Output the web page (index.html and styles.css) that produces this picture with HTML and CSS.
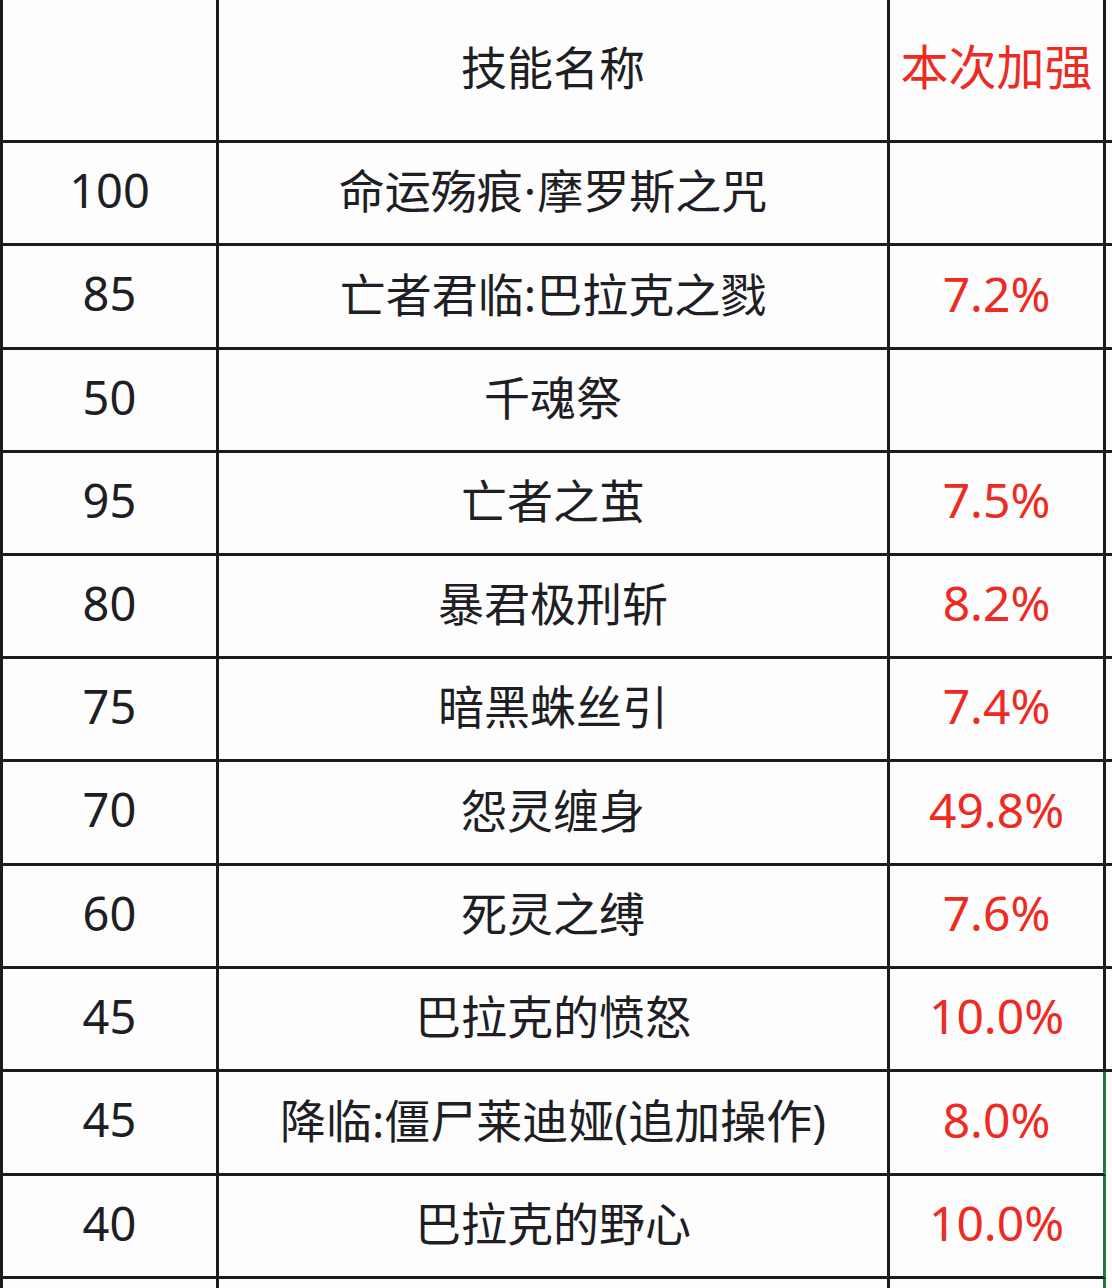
FILE: index.html
```html
<!DOCTYPE html>
<html lang="zh-CN">
<head>
<meta charset="utf-8">
<title>技能名称</title>
<link rel="stylesheet" href="styles.css">
</head>
<body>
<div class="sheet">
  <div class="c"></div><div class="c name">技能名称</div><div class="c red">本次加强</div><div class="c x"></div>
  <div class="c">100</div><div class="c name">命运殇痕<span class="dot">·</span>摩罗斯之咒</div><div class="c red"></div><div class="c x"></div>
  <div class="c">85</div><div class="c name">亡者君临:巴拉克之戮</div><div class="c red">7.2%</div><div class="c x"></div>
  <div class="c">50</div><div class="c name">千魂祭</div><div class="c red"></div><div class="c x"></div>
  <div class="c">95</div><div class="c name">亡者之茧</div><div class="c red">7.5%</div><div class="c x"></div>
  <div class="c">80</div><div class="c name">暴君极刑斩</div><div class="c red">8.2%</div><div class="c x"></div>
  <div class="c">75</div><div class="c name">暗黑蛛丝引</div><div class="c red">7.4%</div><div class="c x"></div>
  <div class="c">70</div><div class="c name">怨灵缠身</div><div class="c red">49.8%</div><div class="c x"></div>
  <div class="c">60</div><div class="c name">死灵之缚</div><div class="c red">7.6%</div><div class="c x"></div>
  <div class="c">45</div><div class="c name">巴拉克的愤怒</div><div class="c red">10.0%</div><div class="c x"></div>
  <div class="c">45</div><div class="c name">降临:僵尸莱迪娅(追加操作)</div><div class="c red sel">8.0%</div><div class="c x open"></div>
  <div class="c">40</div><div class="c name">巴拉克的野心</div><div class="c red sel">10.0%</div><div class="c x open"></div>
  <div class="c"></div><div class="c name"></div><div class="c red sel"></div><div class="c x open"></div>
</div>
</body>
</html>
```

FILE: styles.css
```css
html, body {
  margin: 0;
  padding: 0;
  background: #fdfdfd;
  overflow: hidden;
}

.sheet {
  display: grid;
  grid-template-columns: 216px 671px 216px 40px;
  grid-template-rows: 143px 103px 104px 103px 103px 103px 103px 104px 103px 103px 104px 103px 40px;
  border-left: 3px solid #1c1c1c;
  width: 1146px;
  height: 1288px;
  overflow: hidden;
  font-family: "Noto Sans", "Noto Sans CJK SC", sans-serif;
  font-size: 47px;
  color: #1e1e24;
}

.c {
  box-sizing: border-box;
  border-right: 3px solid #1c1c1c;
  border-bottom: 3px solid #1c1c1c;
  display: flex;
  align-items: center;
  justify-content: center;
  white-space: nowrap;
  line-height: 1;
  padding-bottom: 6px;
}

.name {
  font-family: "Noto Sans", "Noto Sans CJK SC", sans-serif;
  font-size: 46px;
}

.dot {
  font-family: "Noto Sans", sans-serif;
  padding: 0 1px;
}

.red {
  color: #ee2a22;
  font-size: 48px;
}

.red.sel {
  border-right: 3px solid #1f7a3c;
}

.x {
  border-right: none;
}

.x.open {
  border-bottom: none;
}
```
